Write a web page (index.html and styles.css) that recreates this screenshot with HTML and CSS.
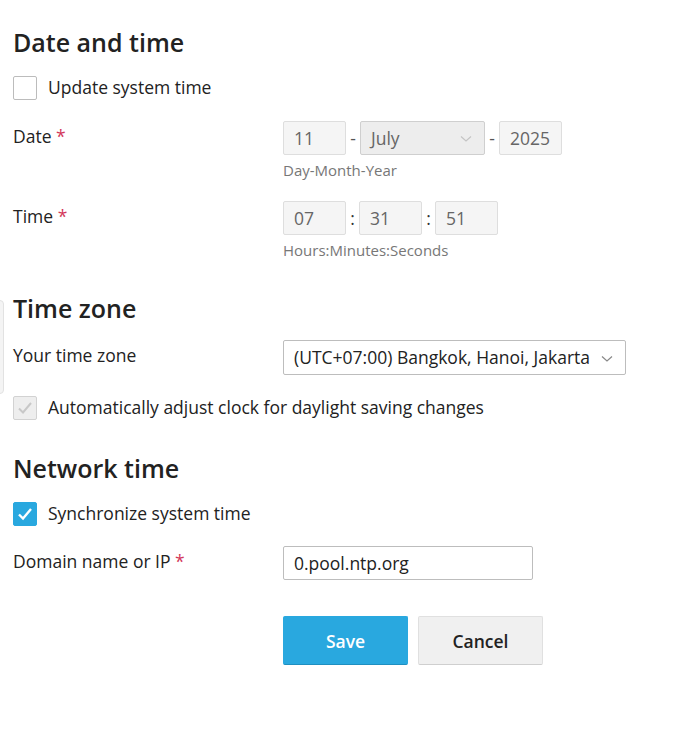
FILE: index.html
```html
<!DOCTYPE html>
<html>
<head>
<meta charset="utf-8">
<link rel="stylesheet" href="styles.css">
</head>
<body>
<div class="edge"></div>
<div class="page">
  <h2 class="section-title first">Date and time</h2>
  <label class="check-row">
    <span class="box"></span>
    <span class="check-text">Update system time</span>
  </label>

  <div class="form-row">
    <div class="label">Date <span class="req">*</span></div>
    <div class="field">
      <div class="inline">
        <div class="inp small">11</div>
        <span class="sep">-</span>
        <div class="inp month">July
          <svg class="chev" width="12" height="8" viewBox="0 0 12 8"><path d="M1 1.5 L6 6 L11 1.5" fill="none" stroke="#c4c4c4" stroke-width="1.2"/></svg>
        </div>
        <span class="sep">-</span>
        <div class="inp small">2025</div>
      </div>
      <div class="help">Day-Month-Year</div>
    </div>
  </div>

  <div class="form-row">
    <div class="label">Time <span class="req">*</span></div>
    <div class="field">
      <div class="inline">
        <div class="inp small">07</div>
        <span class="sep colon">:</span>
        <div class="inp small">31</div>
        <span class="sep colon">:</span>
        <div class="inp small">51</div>
      </div>
      <div class="help">Hours:Minutes:Seconds</div>
    </div>
  </div>

  <h2 class="section-title">Time zone</h2>
  <div class="form-row tight">
    <div class="label">Your time zone</div>
    <div class="field">
      <div class="select">(UTC+07:00) Bangkok, Hanoi, Jakarta
        <svg class="chev" width="12" height="8" viewBox="0 0 12 8"><path d="M1 1.5 L6 6 L11 1.5" fill="none" stroke="#888" stroke-width="1.2"/></svg>
      </div>
    </div>
  </div>
  <label class="check-row">
    <span class="box disabled">
      <svg width="16" height="14" viewBox="0 0 16 14"><path d="M2 7.5 L6 11.5 L14 2" fill="none" stroke="#c8c8c8" stroke-width="2"/></svg>
    </span>
    <span class="check-text">Automatically adjust clock for daylight saving changes</span>
  </label>

  <h2 class="section-title">Network time</h2>
  <label class="check-row">
    <span class="box checked">
      <svg width="16" height="14" viewBox="0 0 16 14"><path d="M2 7.5 L6 11.5 L14 2" fill="none" stroke="#fff" stroke-width="2.4"/></svg>
    </span>
    <span class="check-text">Synchronize system time</span>
  </label>
  <div class="form-row after-check">
    <div class="label">Domain name or IP <span class="req">*</span></div>
    <div class="field">
      <div class="text-input">0.pool.ntp.org</div>
    </div>
  </div>

  <div class="buttons">
    <button class="btn primary">Save</button>
    <button class="btn">Cancel</button>
  </div>
</div>
</body>
</html>
```
FILE: styles.css
```css
html, body {
  margin: 0;
  padding: 0;
  background: #fff;
}
body {
  font-family: "Open Sans", "Noto Sans", sans-serif;
  font-size: 17.5px;
  color: #222;
  position: relative;
}
.edge {
  position: absolute;
  left: -7px;
  top: 300px;
  width: 9px;
  height: 92px;
  background: #f4f4f4;
  border: 1px solid #e2e2e2;
  border-radius: 4px;
}
.page {
  padding: 26px 13px 40px 13px;
}
.section-title {
  font-size: 25px;
  font-weight: 600;
  line-height: 32px;
  margin: 32px 0 17px 0;
  color: #222;
}
.section-title.first {
  margin-top: 0;
}
.check-row {
  display: flex;
  align-items: center;
  gap: 11px;
  height: 25px;
  line-height: 25px;
}
.box {
  width: 22px;
  height: 22px;
  border: 1px solid #bcbcbc;
  border-radius: 2px;
  background: #fff;
  display: flex;
  align-items: center;
  justify-content: center;
  flex: none;
}
.box.disabled {
  background: #eeeeee;
  border-color: #d2d2d2;
}
.box.checked {
  background: #29a8df;
  border-color: #29a8df;
}
.form-row {
  display: grid;
  grid-template-columns: 270px auto;
  margin-top: 21px;
}
.form-row.tight {
  margin-top: -1px;
  margin-bottom: 20px;
}
.form-row.after-check {
  margin-top: 20px;
}
.label {
  padding-top: 3px;
  line-height: 24px;
}
.req {
  color: #d3385a;
}
.inline {
  display: flex;
  align-items: center;
}
.inp {
  box-sizing: border-box;
  height: 34px;
  border: 1px solid #dedede;
  background: #f5f5f5;
  color: #666;
  border-radius: 2px;
  padding: 0 10px;
  line-height: 32px;
  position: relative;
}
.inp.small {
  width: 63px;
}
.inp.month {
  width: 125px;
  background: #ededed;
  border-color: #cfcfcf;
}
.chev {
  position: absolute;
  right: 12px;
  top: 13px;
}
.sep {
  width: 14px;
  text-align: center;
  color: #555;
  line-height: 28px;
}
.sep.colon {
  color: #333;
  width: 13px;
}
.help {
  font-size: 15px;
  line-height: 20px;
  color: #777;
  margin-top: 5px;
}
.select {
  box-sizing: border-box;
  width: 343px;
  height: 35px;
  border: 1px solid #bdbdbd;
  border-radius: 2px;
  padding: 0 10px;
  line-height: 33px;
  position: relative;
  color: #222;
}
.select .chev {
  right: 12px;
  top: 14px;
}
.text-input {
  box-sizing: border-box;
  width: 250px;
  height: 34px;
  border: 1px solid #bdbdbd;
  border-radius: 2px;
  padding: 0 10px;
  line-height: 32px;
  color: #222;
}
.buttons {
  display: flex;
  gap: 10px;
  margin-top: 36px;
  padding-left: 270px;
}
.btn {
  font-family: "Open Sans", "Noto Sans", sans-serif;
  font-size: 17.5px;
  font-weight: 600;
  width: 125px;
  height: 49px;
  border: 1px solid #e0e0e0;
  border-bottom-color: #cfcfcf;
  border-radius: 2px;
  background: #f0f0f0;
  color: #222;
}
.btn.primary {
  background: #29a8df;
  border-color: #29a8df;
  border-bottom-color: #1f8fc0;
  color: #fff;
}
```
